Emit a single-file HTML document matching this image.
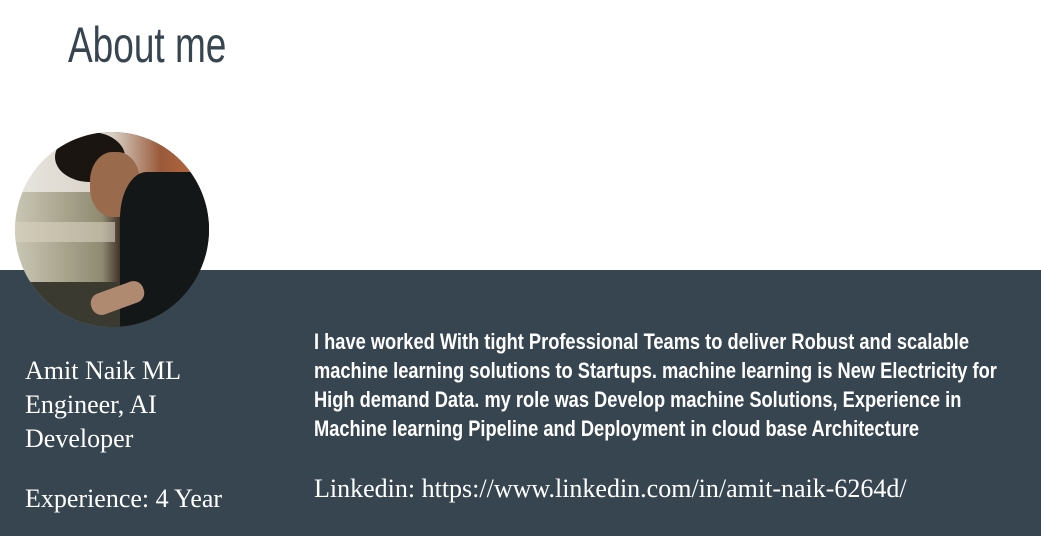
<!DOCTYPE html>
<html><head><style>
body{margin:0;width:1041px;height:536px;overflow:hidden;background:#fff;position:relative;font-family:"Liberation Serif",serif}
h1{position:absolute;left:68px;top:16px;margin:0;font-family:"Liberation Sans",sans-serif;font-weight:normal;font-size:50px;color:#36454f;transform:scaleX(0.74);transform-origin:left;white-space:nowrap}
.band{position:absolute;left:0;top:270px;width:1041px;height:266px;background:#36454f}
.photo{position:absolute;left:15px;top:132px;width:194px;height:195px;border-radius:50%;overflow:hidden;
background:linear-gradient(90deg,#c9c6b4 0%,#a9a58e 25%,#8f8a72 45%,#3a2a22 55%,#15191a 65%,#111516 100%)}
.photo div{position:absolute}
.name{position:absolute;left:25px;top:354px;color:#fff;font-size:26px;line-height:34px;width:220px}
.exp{position:absolute;left:25px;top:484px;color:#fff;font-size:26px}
.desc{position:absolute;left:314px;top:327px;color:#fff;font-family:"Liberation Sans",sans-serif;font-weight:bold;font-size:22px;line-height:29px;white-space:nowrap;transform:scaleX(0.83);transform-origin:left}
.link{position:absolute;left:314px;top:474px;color:#fff;font-size:26px}
</style></head><body>
<h1>About me</h1>
<div class="band"></div>
<div class="photo">
<div style="left:0;top:0;width:194px;height:60px;background:linear-gradient(90deg,#e8e6e0,#d8d0c6 50%,#9a5a3a 75%,#c06a40)"></div>
<div style="left:0;top:90px;width:100px;height:20px;background:#d8d2c0;opacity:.6"></div>
<div style="left:0;top:150px;width:130px;height:45px;background:#3a3a30"></div>
<div style="left:40px;top:0;width:70px;height:50px;border-radius:50%;background:#1b1512"></div>
<div style="left:75px;top:20px;width:50px;height:65px;border-radius:45%;background:#9a6a4c"></div>
<div style="left:105px;top:40px;width:89px;height:155px;background:#131718;border-radius:30% 0 0 0"></div>
<div style="left:75px;top:155px;width:55px;height:22px;background:#b08a70;border-radius:10px;transform:rotate(-20deg)"></div>
</div>
<div class="name">Amit Naik ML<br>Engineer, AI<br>Developer</div>
<div class="exp">Experience: 4 Year</div>
<div class="desc">I have worked With tight Professional Teams to deliver Robust and scalable<br>machine learning solutions to Startups. machine learning is New Electricity for<br>High demand Data. my role was Develop machine Solutions, Experience in<br>Machine learning Pipeline and Deployment in cloud base Architecture</div>
<div class="link">Linkedin: https://www.linkedin.com/in/amit-naik-6264d/</div>
</body></html>
